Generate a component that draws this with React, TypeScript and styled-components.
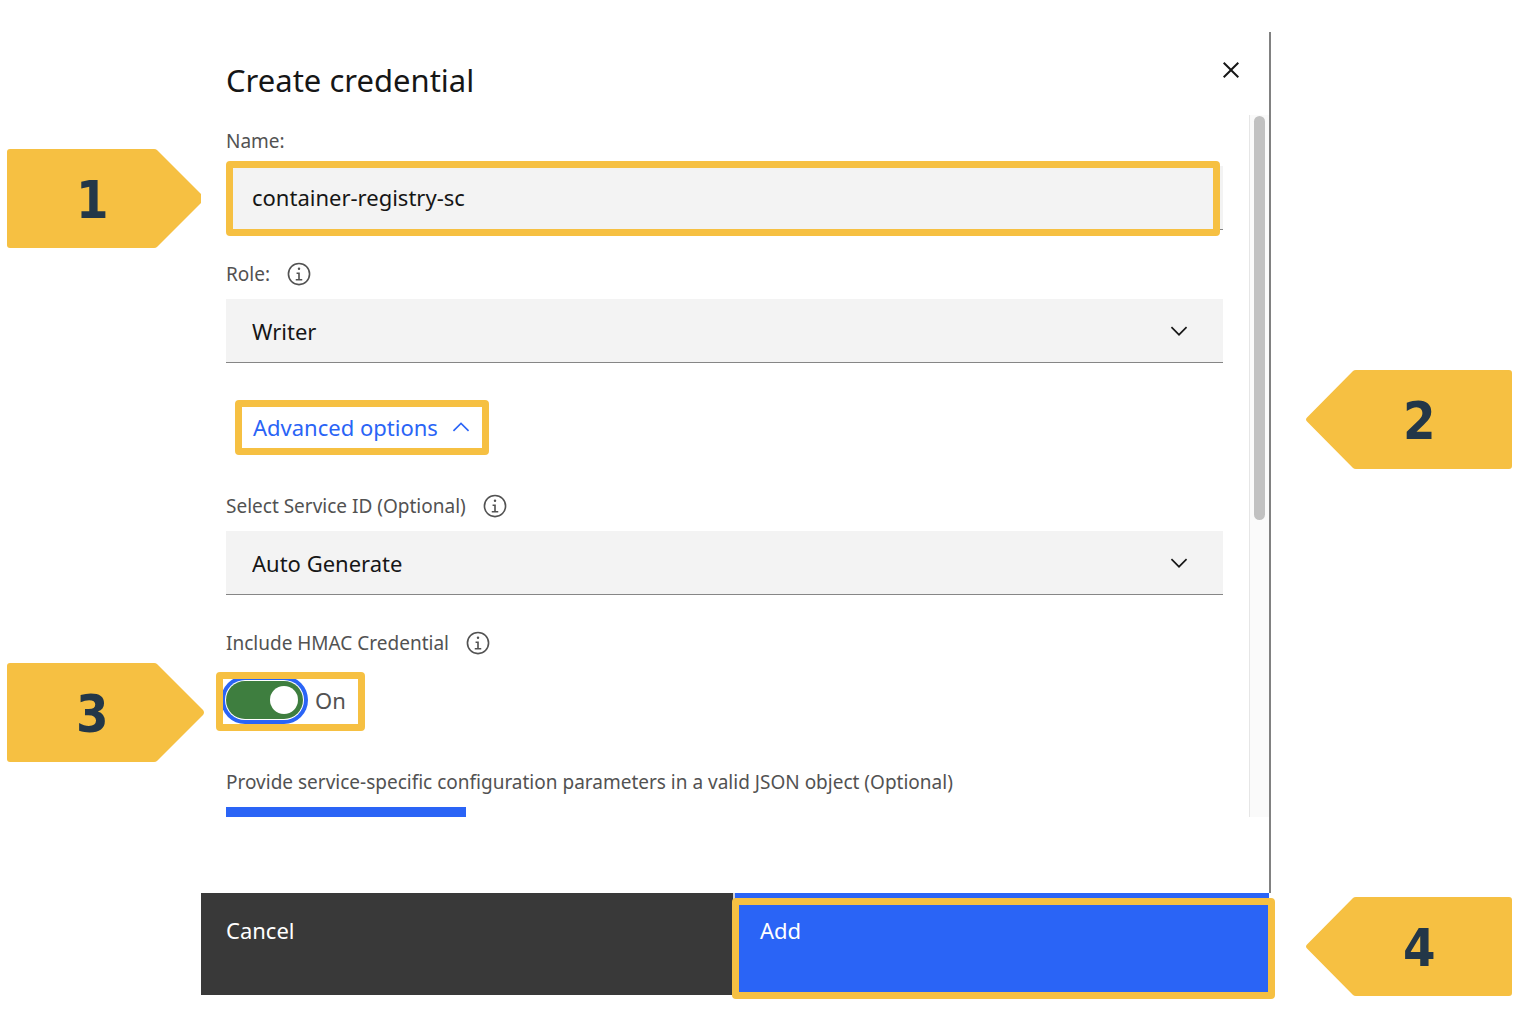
import React, { useState } from "react";
import styled, { createGlobalStyle, css } from "styled-components";

const color = {
  accent: "#f6c042",
  navy: "#233748",
  blue: "#2a64f6",
  dark: "#393939",
  text: "#161616",
  label: "#525252",
  field: "#f3f3f3",
  rule: "#868686",
  green: "#3e7e3f",
};

const GlobalStyle = createGlobalStyle`
  * { box-sizing: border-box; }
  body {
    margin: 0;
    background: #ffffff;
    color: ${color.text};
    font-family: "Noto Sans", "Open Sans", sans-serif;
  }
  button, input, select { font: inherit; color: inherit; border-radius: 0; }
`;

const Page = styled.div`
  display: grid;
  grid-template-columns: 201px minmax(0, 1fr) 259px;
  min-height: 100vh;
`;

const Gutter = styled.aside<{ $side: "left" | "right" }>`
  display: flex;
  flex-direction: column;
  ${({ $side }) =>
    $side === "left"
      ? css`
          padding: 149px 0 0 7px;
          gap: 415px;
        `
      : css`
          padding: 370px 18px 0 35px;
          gap: 428px;
        `}
`;

const CalloutBox = styled.div<{ $side: "left" | "right"; $width: number }>`
  display: grid;
  grid-template-areas: "stack";
  width: ${({ $width }) => $width}px;
  height: 99px;

  svg {
    grid-area: stack;
    fill: ${color.accent};
  }
  span {
    grid-area: stack;
    place-self: center start;
    width: 100%;
    padding-top: 2px;
    padding-left: ${({ $side }) => ($side === "left" ? 69 : 97)}px;
    color: ${color.navy};
    font-family: "DejaVu Sans Condensed", "DejaVu Sans", sans-serif;
    font-weight: 700;
    font-size: 52px;
    line-height: 64px;
  }
`;

const calloutPath = {
  left: "M3 0H147Q149 0 150 1L196 47Q198 49.500 196 52L150 98Q149 99 147 99H3Q0 99 0 96V3Q0 0 3 0Z",
  right: "M203 0H50Q48 0 47 1L1 47.500Q-1 49.500 1 51.500L47 98Q48 99 50 99H203Q206 99 206 96V3Q206 0 203 0Z",
};

const Panel = styled.main`
  padding: 32px 0 20px;
`;

const PanelBody = styled.div`
  border-right: 2px solid #818181;
  padding-bottom: 76px;
`;

const Header = styled.header`
  display: flex;
  justify-content: space-between;
  align-items: flex-start;
  height: 83px;
  padding: 22px 22px 0 25px;
`;

const Title = styled.h1`
  margin: 0;
  padding-top: 6px;
  font-size: 31px;
  line-height: 40px;
  font-weight: 400;
`;

const IconButton = styled.button`
  display: flex;
  padding: 0;
  border: 0;
  background: none;
  cursor: pointer;
`;

const ScrollArea = styled.div`
  display: grid;
  grid-template-columns: minmax(0, 1fr) 20px;
  height: 702px;
  overflow: hidden;
`;

const Track = styled.div`
  padding: 1px 4px;
  background: #fafafa;
  border-left: 1px solid #e6e6e6;
`;

const Thumb = styled.div`
  width: 11px;
  height: 404px;
  border-radius: 6px;
  background: #c1c1c1;
`;

const Form = styled.form`
  padding: 13px 26px 0 25px;
`;

const Field = styled.div<{ $gap?: number }>`
  margin-top: ${({ $gap }) => $gap ?? 0}px;
`;

const LabelRow = styled.div`
  display: flex;
  align-items: center;
  gap: 16px;
  height: 26px;
  margin-bottom: 12px;
  color: ${color.label};
  font-size: 19px;
  line-height: 26px;
  white-space: nowrap;
`;

const Control = styled.div`
  position: relative;
  height: 64px;
`;

const controlStyle = css`
  width: 100%;
  height: 64px;
  padding: 0 26px;
  border: 0;
  border-bottom: 1px solid ${color.rule};
  background: ${color.field};
  font-size: 22px;
  outline: 0;
`;

const TextInput = styled.input`
  ${controlStyle}
  padding-bottom: 2px;
`;

const Select = styled.select`
  ${controlStyle}
  appearance: none;
`;

const SelectIcon = styled.span`
  position: absolute;
  top: 19px;
  right: 31px;
  display: flex;
  pointer-events: none;
`;

const Highlight = styled.span<{ $inset: string }>`
  position: absolute;
  inset: ${({ $inset }) => $inset};
  border: 7px solid ${color.accent};
  border-radius: 4px;
  pointer-events: none;
`;

const AdvancedButton = styled.button`
  display: flex;
  align-items: center;
  justify-content: space-between;
  width: 254px;
  height: 55px;
  margin-left: 9px;
  padding: 0 8px 2px 11px;
  border: 7px solid ${color.accent};
  border-radius: 4px;
  background: #ffffff;
  color: ${color.blue};
  font-size: 22px;
  cursor: pointer;
`;

const ToggleRow = styled.div`
  position: relative;
  display: flex;
  align-items: center;
  gap: 12px;
  width: 130px;
  height: 64px;
  color: ${color.label};
  font-size: 22px;
`;

const Toggle = styled.input`
  appearance: none;
  display: flex;
  align-items: center;
  justify-content: flex-start;
  width: 77px;
  height: 38px;
  margin: 0;
  padding: 0 5px;
  border-radius: 19px;
  background: #8d8d8d;
  box-shadow: 0 0 0 1px #ffffff, 0 0 0 5px ${color.blue};
  cursor: pointer;

  &::before {
    content: "";
    width: 28px;
    height: 28px;
    border-radius: 50%;
    background: #ffffff;
  }
  &:checked {
    justify-content: flex-end;
    background: ${color.green};
  }
`;

const EditorTab = styled.div`
  width: 240px;
  height: 60px;
  background: ${color.blue};
`;

const Footer = styled.footer`
  display: grid;
  grid-template-columns: 1fr 1fr;
  padding-right: 2px;
`;

const FooterCell = styled.div<{ $divided?: boolean }>`
  position: relative;
  border-right: ${({ $divided }) => ($divided ? "2px solid #cfd3dc" : "0")};
`;

const FooterButton = styled.button<{ $primary?: boolean }>`
  display: flex;
  width: 100%;
  height: 102px;
  padding: 23px 25px;
  border: 0;
  background: ${({ $primary }) => ($primary ? color.blue : color.dark)};
  color: #ffffff;
  font-size: 22px;
  line-height: 28px;
  text-align: left;
  cursor: pointer;
`;

function Callout({ side, label, width }: { side: "left" | "right"; label: string; width: number }) {
  return (
    <CalloutBox $side={side} $width={width}>
      <svg width={width} height="99" viewBox={`0 0 ${width} 99`} aria-hidden="true">
        <path d={calloutPath[side]} />
      </svg>
      <span>{label}</span>
    </CalloutBox>
  );
}

function InfoIcon() {
  return (
    <svg width="26" height="26" viewBox="0 0 32 32" fill="currentColor" aria-hidden="true">
      <path d="M17 22V14H13V16H15V22H12V24H20V22Z" />
      <path d="M16 8a1.500 1.500 0 1 0 1.500 1.500A1.500 1.500 0 0 0 16 8Z" />
      <path d="M16 30A14 14 0 1 1 30 16 14 14 0 0 1 16 30ZM16 4A12 12 0 1 0 28 16 12 12 0 0 0 16 4Z" />
    </svg>
  );
}

function Chevron({ up }: { up?: boolean }) {
  return (
    <svg width="26" height="26" viewBox="0 0 16 16" fill="currentColor" aria-hidden="true">
      <path d={up ? "M8 5 13 10 12.300 10.700 8 6.400 3.700 10.700 3 10Z" : "M8 11 3 6 3.700 5.300 8 9.600 12.300 5.300 13 6Z"} />
    </svg>
  );
}

function CloseIcon() {
  return (
    <svg width="32" height="32" viewBox="0 0 32 32" fill="currentColor" aria-hidden="true">
      <path d="M24 9.400 22.600 8 16 14.600 9.400 8 8 9.400 14.600 16 8 22.600 9.400 24 16 17.400 22.600 24 24 22.600 17.400 16Z" />
    </svg>
  );
}

export default function App() {
  const [name, setName] = useState("container-registry-sc");
  const [hmac, setHmac] = useState(true);

  return (
    <>
      <GlobalStyle />
      <Page>
        <Gutter $side="left">
          <Callout side="left" label="1" width={194} />
          <Callout side="left" label="3" width={198} />
        </Gutter>

        <Panel>
          <PanelBody>
            <Header>
              <Title>Create credential</Title>
              <IconButton type="button" aria-label="Close">
                <CloseIcon />
              </IconButton>
            </Header>
            <ScrollArea>
              <Form>
                <Field>
                  <LabelRow>
                    <label htmlFor="name">Name:</label>
                  </LabelRow>
                  <Control>
                    <TextInput id="name" value={name} onChange={(e) => setName(e.target.value)} />
                    <Highlight $inset="-5px 3px -6px 0" />
                  </Control>
                </Field>

                <Field $gap={31}>
                  <LabelRow>
                    <label htmlFor="role">Role:</label>
                    <InfoIcon />
                  </LabelRow>
                  <Control>
                    <Select id="role">
                      <option>Writer</option>
                    </Select>
                    <SelectIcon>
                      <Chevron />
                    </SelectIcon>
                  </Control>
                </Field>

                <Field $gap={37}>
                  <AdvancedButton type="button" aria-expanded="true">
                    Advanced options
                    <Chevron up />
                  </AdvancedButton>
                </Field>

                <Field $gap={38}>
                  <LabelRow>
                    <label htmlFor="service">Select Service ID (Optional)</label>
                    <InfoIcon />
                  </LabelRow>
                  <Control>
                    <Select id="service">
                      <option>Auto Generate</option>
                    </Select>
                    <SelectIcon>
                      <Chevron />
                    </SelectIcon>
                  </Control>
                </Field>

                <Field $gap={35}>
                  <LabelRow>
                    <label htmlFor="hmac">Include HMAC Credential</label>
                    <InfoIcon />
                  </LabelRow>
                  <ToggleRow>
                    <Toggle
                      id="hmac"
                      type="checkbox"
                      role="switch"
                      checked={hmac}
                      onChange={(e) => setHmac(e.target.checked)}
                    />
                    <span>{hmac ? "On" : "Off"}</span>
                    <Highlight $inset="4px -9px 1px -10px" />
                  </ToggleRow>
                </Field>

                <Field $gap={37}>
                  <LabelRow>
                    Provide service-specific configuration parameters in a valid JSON object (Optional)
                  </LabelRow>
                  <EditorTab />
                </Field>
              </Form>
              <Track>
                <Thumb />
              </Track>
            </ScrollArea>
          </PanelBody>
          <Footer>
            <FooterCell $divided>
              <FooterButton type="button">Cancel</FooterButton>
            </FooterCell>
            <FooterCell>
              <FooterButton type="submit" $primary>
                Add
              </FooterButton>
              <Highlight $inset="5px -6px -4px -3px" />
            </FooterCell>
          </Footer>
        </Panel>

        <Gutter $side="right">
          <Callout side="right" label="2" width={206} />
          <Callout side="right" label="4" width={206} />
        </Gutter>
      </Page>
    </>
  );
}
